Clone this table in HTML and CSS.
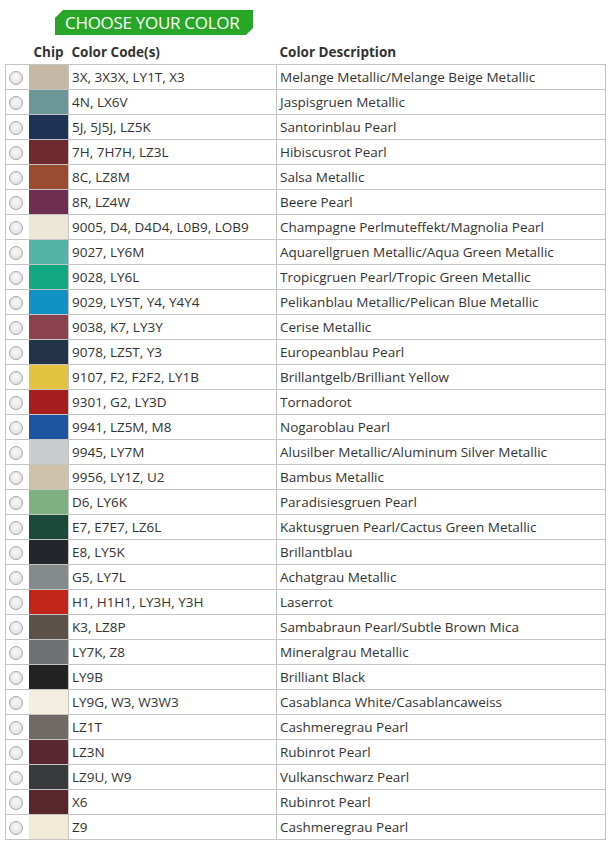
FILE: index.html
```html
<!DOCTYPE html>
<html>
<head>
<meta charset="utf-8">
<link rel="stylesheet" href="styles.css">
</head>
<body>
<div class="page">
  <div class="banner-wrap"><h1 class="banner">CHOOSE YOUR COLOR</h1></div>
  <table class="colors">
    <colgroup><col class="w-radio"><col class="w-chip"><col class="w-code"><col class="w-desc"></colgroup>
    <thead>
      <tr><th class="c-radio"></th><th class="c-chip">Chip</th><th class="c-code">Color Code(s)</th><th class="c-desc">Color Description</th></tr>
    </thead>
    <tbody>
      <tr><td class="c-radio"><input type="radio" name="c"></td><td class="c-chip" style="background:#c5b9a6"></td><td class="c-code">3X, 3X3X, LY1T, X3</td><td class="c-desc">Melange Metallic/Melange Beige Metallic</td></tr>
      <tr><td class="c-radio"><input type="radio" name="c"></td><td class="c-chip" style="background:#6b9799"></td><td class="c-code">4N, LX6V</td><td class="c-desc">Jaspisgruen Metallic</td></tr>
      <tr><td class="c-radio"><input type="radio" name="c"></td><td class="c-chip" style="background:#1e3354"></td><td class="c-code">5J, 5J5J, LZ5K</td><td class="c-desc">Santorinblau Pearl</td></tr>
      <tr><td class="c-radio"><input type="radio" name="c"></td><td class="c-chip" style="background:#6e2a2f"></td><td class="c-code">7H, 7H7H, LZ3L</td><td class="c-desc">Hibiscusrot Pearl</td></tr>
      <tr><td class="c-radio"><input type="radio" name="c"></td><td class="c-chip" style="background:#9b4c30"></td><td class="c-code">8C, LZ8M</td><td class="c-desc">Salsa Metallic</td></tr>
      <tr><td class="c-radio"><input type="radio" name="c"></td><td class="c-chip" style="background:#6f2e50"></td><td class="c-code">8R, LZ4W</td><td class="c-desc">Beere Pearl</td></tr>
      <tr><td class="c-radio"><input type="radio" name="c"></td><td class="c-chip" style="background:#ede7d7"></td><td class="c-code">9005, D4, D4D4, L0B9, LOB9</td><td class="c-desc">Champagne Perlmuteffekt/Magnolia Pearl</td></tr>
      <tr><td class="c-radio"><input type="radio" name="c"></td><td class="c-chip" style="background:#53b3a7"></td><td class="c-code">9027, LY6M</td><td class="c-desc">Aquarellgruen Metallic/Aqua Green Metallic</td></tr>
      <tr><td class="c-radio"><input type="radio" name="c"></td><td class="c-chip" style="background:#12a882"></td><td class="c-code">9028, LY6L</td><td class="c-desc">Tropicgruen Pearl/Tropic Green Metallic</td></tr>
      <tr><td class="c-radio"><input type="radio" name="c"></td><td class="c-chip" style="background:#1092c4"></td><td class="c-code">9029, LY5T, Y4, Y4Y4</td><td class="c-desc">Pelikanblau Metallic/Pelican Blue Metallic</td></tr>
      <tr><td class="c-radio"><input type="radio" name="c"></td><td class="c-chip" style="background:#8b4350"></td><td class="c-code">9038, K7, LY3Y</td><td class="c-desc">Cerise Metallic</td></tr>
      <tr><td class="c-radio"><input type="radio" name="c"></td><td class="c-chip" style="background:#233449"></td><td class="c-code">9078, LZ5T, Y3</td><td class="c-desc">Europeanblau Pearl</td></tr>
      <tr><td class="c-radio"><input type="radio" name="c"></td><td class="c-chip" style="background:#e2c441"></td><td class="c-code">9107, F2, F2F2, LY1B</td><td class="c-desc">Brillantgelb/Brilliant Yellow</td></tr>
      <tr><td class="c-radio"><input type="radio" name="c"></td><td class="c-chip" style="background:#a61e1d"></td><td class="c-code">9301, G2, LY3D</td><td class="c-desc">Tornadorot</td></tr>
      <tr><td class="c-radio"><input type="radio" name="c"></td><td class="c-chip" style="background:#1d55a0"></td><td class="c-code">9941, LZ5M, M8</td><td class="c-desc">Nogaroblau Pearl</td></tr>
      <tr><td class="c-radio"><input type="radio" name="c"></td><td class="c-chip" style="background:#c8cccf"></td><td class="c-code">9945, LY7M</td><td class="c-desc">Alusilber Metallic/Aluminum Silver Metallic</td></tr>
      <tr><td class="c-radio"><input type="radio" name="c"></td><td class="c-chip" style="background:#cdc1a9"></td><td class="c-code">9956, LY1Z, U2</td><td class="c-desc">Bambus Metallic</td></tr>
      <tr><td class="c-radio"><input type="radio" name="c"></td><td class="c-chip" style="background:#7fb082"></td><td class="c-code">D6, LY6K</td><td class="c-desc">Paradisiesgruen Pearl</td></tr>
      <tr><td class="c-radio"><input type="radio" name="c"></td><td class="c-chip" style="background:#1b4a3a"></td><td class="c-code">E7, E7E7, LZ6L</td><td class="c-desc">Kaktusgruen Pearl/Cactus Green Metallic</td></tr>
      <tr><td class="c-radio"><input type="radio" name="c"></td><td class="c-chip" style="background:#23262d"></td><td class="c-code">E8, LY5K</td><td class="c-desc">Brillantblau</td></tr>
      <tr><td class="c-radio"><input type="radio" name="c"></td><td class="c-chip" style="background:#858a8d"></td><td class="c-code">G5, LY7L</td><td class="c-desc">Achatgrau Metallic</td></tr>
      <tr><td class="c-radio"><input type="radio" name="c"></td><td class="c-chip" style="background:#c0261a"></td><td class="c-code">H1, H1H1, LY3H, Y3H</td><td class="c-desc">Laserrot</td></tr>
      <tr><td class="c-radio"><input type="radio" name="c"></td><td class="c-chip" style="background:#5c5149"></td><td class="c-code">K3, LZ8P</td><td class="c-desc">Sambabraun Pearl/Subtle Brown Mica</td></tr>
      <tr><td class="c-radio"><input type="radio" name="c"></td><td class="c-chip" style="background:#6e7275"></td><td class="c-code">LY7K, Z8</td><td class="c-desc">Mineralgrau Metallic</td></tr>
      <tr><td class="c-radio"><input type="radio" name="c"></td><td class="c-chip" style="background:#222222"></td><td class="c-code">LY9B</td><td class="c-desc">Brilliant Black</td></tr>
      <tr><td class="c-radio"><input type="radio" name="c"></td><td class="c-chip" style="background:#f3eedf"></td><td class="c-code">LY9G, W3, W3W3</td><td class="c-desc">Casablanca White/Casablancaweiss</td></tr>
      <tr><td class="c-radio"><input type="radio" name="c"></td><td class="c-chip" style="background:#716966"></td><td class="c-code">LZ1T</td><td class="c-desc">Cashmeregrau Pearl</td></tr>
      <tr><td class="c-radio"><input type="radio" name="c"></td><td class="c-chip" style="background:#5a2630"></td><td class="c-code">LZ3N</td><td class="c-desc">Rubinrot Pearl</td></tr>
      <tr><td class="c-radio"><input type="radio" name="c"></td><td class="c-chip" style="background:#373b3c"></td><td class="c-code">LZ9U, W9</td><td class="c-desc">Vulkanschwarz Pearl</td></tr>
      <tr><td class="c-radio"><input type="radio" name="c"></td><td class="c-chip" style="background:#59262e"></td><td class="c-code">X6</td><td class="c-desc">Rubinrot Pearl</td></tr>
      <tr><td class="c-radio"><input type="radio" name="c"></td><td class="c-chip" style="background:#f0ead6"></td><td class="c-code">Z9</td><td class="c-desc">Cashmeregrau Pearl</td></tr>
    </tbody>
  </table>
</div>
</body>
</html>
```
FILE: styles.css
```css
html, body {
  margin: 0;
  padding: 0;
  background: #fff;
}
.page {
  padding: 10px 5px 0 5px;
  font-family: "Open Sans", "DejaVu Sans", sans-serif;
  color: #333;
}
.banner-wrap {
  padding-left: 50px;
  height: 30px;
}
.banner {
  display: block;
  box-sizing: border-box;
  margin: 0;
  height: 25px;
  line-height: 25px;
  padding: 0 0 0 10px;
  width: 198px;
  background: #27a627;
  color: #fff;
  font-weight: normal;
  font-size: 17px;
  letter-spacing: -0.3px;
  white-space: nowrap;
  clip-path: polygon(8px 0, 100% 0, 100% calc(100% - 7px), calc(100% - 7px) 100%, 0 100%, 0 8px);
}
.colors {
  border-collapse: collapse;
  width: 601px;
  font-size: 13.5px;
  table-layout: fixed;
}
.w-radio { width: 23px; }
.w-chip { width: 40px; }
.w-code { width: 208px; }
.colors th {
  font-weight: bold;
  text-align: left;
  height: 24px;
  padding: 0 3px;
  border: none;
  vertical-align: middle;
  white-space: nowrap;
  overflow: visible;
}
.colors th.c-chip {
  text-align: center;
  padding: 0;
}
.colors td {
  height: 24px;
  padding: 0 3px;
  border: 1px solid #c4c4c4;
  vertical-align: middle;
  white-space: nowrap;
}
.colors td.c-radio {
  border-right: none;
  padding: 0 2px 0 0;
  text-align: center;
}
.colors td.c-chip {
  border-left: none;
  padding: 0;
}
input[type="radio"] {
  appearance: none;
  -webkit-appearance: none;
  margin: 0;
  width: 14px;
  height: 14px;
  border-radius: 50%;
  border: 1px solid #a9a9a9;
  background: radial-gradient(circle at 50% 40%, #fafafa 0%, #e8e8e8 55%, #d4d4d4 100%);
  vertical-align: middle;
  display: inline-block;
  box-sizing: border-box;
}
```
